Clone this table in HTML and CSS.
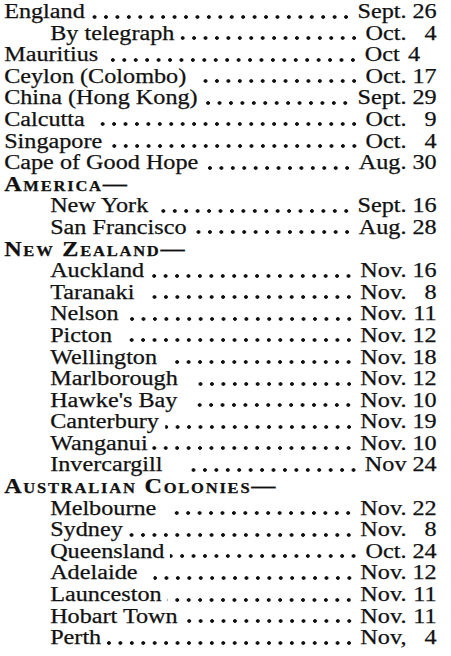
FILE: index.html
```html
<!DOCTYPE html>
<html>
<head>
<meta charset="utf-8">
<link rel="stylesheet" href="styles.css">
</head>
<body>
<div class="list">
  <div class="row"><span class="name">England</span><span class="lead"></span><span class="date"><span class="mon">Sept.</span><span class="day">26</span></span></div>
  <div class="row sub"><span class="name">By telegraph</span><span class="lead"></span><span class="date"><span class="mon">Oct.</span><span class="day">4</span></span></div>
  <div class="row"><span class="name">Mauritius</span><span class="lead"></span><span class="date short"><span class="mon">Oct</span><span class="day">4</span></span></div>
  <div class="row"><span class="name">Ceylon (Colombo)</span><span class="lead wide"></span><span class="date"><span class="mon">Oct.</span><span class="day">17</span></span></div>
  <div class="row"><span class="name">China (Hong Kong)</span><span class="lead"></span><span class="date"><span class="mon">Sept.</span><span class="day">29</span></span></div>
  <div class="row"><span class="name">Calcutta</span><span class="lead wide"></span><span class="date"><span class="mon">Oct.</span><span class="day">9</span></span></div>
  <div class="row"><span class="name">Singapore</span><span class="lead"></span><span class="date"><span class="mon">Oct.</span><span class="day">4</span></span></div>
  <div class="row"><span class="name">Cape of Good Hope</span><span class="lead"></span><span class="date"><span class="mon">Aug.</span><span class="day">30</span></span></div>
  <div class="row head"><span class="name">America—</span></div>
  <div class="row sub"><span class="name">New York</span><span class="lead"></span><span class="date"><span class="mon">Sept.</span><span class="day">16</span></span></div>
  <div class="row sub"><span class="name">San Francisco</span><span class="lead"></span><span class="date"><span class="mon">Aug.</span><span class="day">28</span></span></div>
  <div class="row head"><span class="name">New Zealand—</span></div>
  <div class="row sub"><span class="name">Auckland</span><span class="lead"></span><span class="date"><span class="mon">Nov.</span><span class="day">16</span></span></div>
  <div class="row sub"><span class="name">Taranaki</span><span class="lead wide"></span><span class="date"><span class="mon">Nov.</span><span class="day">8</span></span></div>
  <div class="row sub"><span class="name">Nelson</span><span class="lead"></span><span class="date"><span class="mon">Nov.</span><span class="day">11</span></span></div>
  <div class="row sub"><span class="name">Picton</span><span class="lead wide"></span><span class="date"><span class="mon">Nov.</span><span class="day">12</span></span></div>
  <div class="row sub"><span class="name">Wellington</span><span class="lead wide"></span><span class="date"><span class="mon">Nov.</span><span class="day">18</span></span></div>
  <div class="row sub"><span class="name">Marlborough</span><span class="lead wide"></span><span class="date"><span class="mon">Nov.</span><span class="day">12</span></span></div>
  <div class="row sub"><span class="name">Hawke's Bay</span><span class="lead wide"></span><span class="date"><span class="mon">Nov.</span><span class="day">10</span></span></div>
  <div class="row sub"><span class="name">Canterbury</span><span class="lead"></span><span class="date"><span class="mon">Nov.</span><span class="day">19</span></span></div>
  <div class="row sub"><span class="name">Wanganui</span><span class="lead tight"></span><span class="date"><span class="mon">Nov.</span><span class="day">10</span></span></div>
  <div class="row sub"><span class="name">Invercargill</span><span class="lead wider"></span><span class="date"><span class="mon">Nov</span><span class="day">24</span></span></div>
  <div class="row head"><span class="name">Australian Colonies—</span></div>
  <div class="row sub"><span class="name">Melbourne</span><span class="lead wide"></span><span class="date"><span class="mon">Nov.</span><span class="day">22</span></span></div>
  <div class="row sub"><span class="name">Sydney</span><span class="lead"></span><span class="date"><span class="mon">Nov.</span><span class="day">8</span></span></div>
  <div class="row sub"><span class="name">Queensland</span><span class="lead"></span><span class="date"><span class="mon">Oct.</span><span class="day">24</span></span></div>
  <div class="row sub"><span class="name">Adelaide</span><span class="lead wide"></span><span class="date"><span class="mon">Nov.</span><span class="day">12</span></span></div>
  <div class="row sub"><span class="name">Launceston</span><span class="lead"></span><span class="date"><span class="mon">Nov.</span><span class="day">11</span></span></div>
  <div class="row sub"><span class="name">Hobart Town</span><span class="lead"></span><span class="date"><span class="mon">Nov.</span><span class="day">11</span></span></div>
  <div class="row sub"><span class="name">Perth</span><span class="lead tight"></span><span class="date"><span class="mon">Nov,</span><span class="day">4</span></span></div>
</div>
</body>
</html>
```
FILE: styles.css
```css
html, body {
  margin: 0;
  padding: 0;
  background: #fff;
  overflow: hidden;
}
body {
  font-family: "Liberation Serif", "Times New Roman", serif;
  font-size: 20.5px;
  color: #111;
}
/* the whole column is set in a wide face: stretch it horizontally */
.list {
  width: 382px;
  box-sizing: border-box;
  padding: 1px 12px 0 3.5px;
  display: flex;
  flex-direction: column;
  transform: scaleX(1.18);
  transform-origin: 0 0;
  -webkit-text-stroke: 0.25px #111;
}
.row {
  display: flex;
  align-items: baseline;
  height: 21.6px;
  line-height: 21.6px;
  white-space: nowrap;
}
.row.sub {
  padding-left: 39px;
}
.name {
  flex: none;
}
.head .name {
  font-weight: bold;
  font-variant: small-caps;
  letter-spacing: 1.5px;
}
.lead {
  flex: 1;
  align-self: stretch;
  margin: 0 5px 0 5px;
  background-image: radial-gradient(circle, #111 1.5px, rgba(0,0,0,0) 2px);
  background-size: 9.7px 4px;
  background-repeat: repeat-x;
  background-position: right 0 top 13.5px;
}
.lead.tight {
  margin-left: 1px;
}
.lead.wide {
  margin-left: 13px;
}
.lead.wider {
  margin-left: 24px;
}
.date {
  flex: none;
  display: flex;
  align-items: baseline;
}
.day {
  display: inline-block;
  min-width: 22px;
  margin-left: 3.5px;
  text-align: right;
}
.date.short {
  margin-right: 14px;
}
.date.short .day {
  min-width: 0;
  margin-left: 7px;
}
```
